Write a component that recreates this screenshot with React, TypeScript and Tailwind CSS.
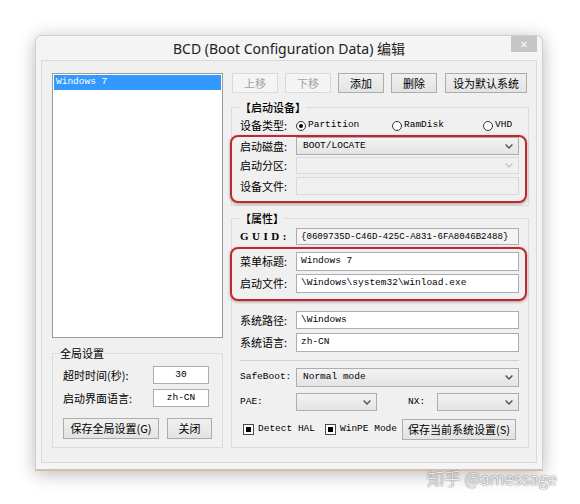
import clsx from "clsx";
import type { ReactNode } from "react";

const CJK = "font-['Noto_Sans_CJK_SC',sans-serif]";
const MONO = "font-['Liberation_Mono','Noto_Sans_CJK_SC',monospace]";

function Chevron({ disabled }: { disabled?: boolean }) {
  return (
    <svg width="8" height="5" viewBox="0 0 8 5" className="shrink-0">
      <path
        d="M0.6 0.6 L4 4 L7.4 0.6"
        fill="none"
        className={disabled ? "stroke-[#c6c6c6]" : "stroke-[#505050]"}
        strokeWidth="1.4"
      />
    </svg>
  );
}

function Combo({ value, disabled, className }: { value?: string; disabled?: boolean; className?: string }) {
  return (
    <div
      className={clsx(
        "flex items-center justify-between border pl-[6px] pr-[5px]",
        disabled ? "border-[#d9d9d9] bg-[#f0f0f0]" : "border-[#adadad] bg-gradient-to-b from-[#f3f3f3] to-[#e4e4e4]",
        className
      )}
    >
      <span className={`${MONO} text-[9.5px] text-black`}>{value}</span>
      <Chevron disabled={disabled} />
    </div>
  );
}

function Edit({
  value,
  className,
  textClass = "text-[9.5px]",
  center,
  tone = "white",
}: {
  value?: string;
  className?: string;
  textClass?: string;
  center?: boolean;
  tone?: "white" | "readonly" | "disabled";
}) {
  return (
    <div
      className={clsx(
        "flex items-center overflow-hidden border",
        center ? "justify-center" : "px-[4px]",
        tone === "white" && "border-[#abadb3] bg-white",
        tone === "readonly" && "border-[#abadb3] bg-[#f4f4f4]",
        tone === "disabled" && "border-[#d9d9d9] bg-[#f0f0f0]",
        className
      )}
    >
      <span className={clsx(MONO, textClass, "whitespace-nowrap text-black")}>{value}</span>
    </div>
  );
}

function Btn({ children, disabled, className }: { children: ReactNode; disabled?: boolean; className?: string }) {
  return (
    <button
      className={clsx(
        `${CJK} flex items-center justify-center border text-[11px] leading-none`,
        disabled
          ? "border-[#d9d9d9] bg-[#f4f4f4] text-[#a3a3a3]"
          : "border-[#acacac] bg-gradient-to-b from-[#f0f0f0] to-[#e3e3e3] text-black",
        className
      )}
    >
      {children}
    </button>
  );
}

function Label({ children, className }: { children: ReactNode; className?: string }) {
  return <span className={clsx(`${CJK} w-[56px] shrink-0 text-[11px] leading-none text-black`, className)}>{children}</span>;
}

function Radio({ label, checked, className }: { label: string; checked?: boolean; className?: string }) {
  return (
    <div className={clsx("flex items-center gap-[2px]", className)}>
      <span className="flex h-[10px] w-[10px] items-center justify-center rounded-full border border-[#333] bg-white">
        {checked && <span className="h-[4px] w-[4px] rounded-full bg-black" />}
      </span>
      <span className={`${MONO} text-[9.5px] text-black`}>{label}</span>
    </div>
  );
}

function Check({ label, className }: { label: string; className?: string }) {
  return (
    <div className={clsx("flex items-center gap-[4px]", className)}>
      <span className="flex h-[11px] w-[11px] items-center justify-center border border-[#4a4a4a] bg-white">
        <span className="h-[5px] w-[5px] bg-black" />
      </span>
      <span className={`${MONO} text-[9.5px] text-black`}>{label}</span>
    </div>
  );
}

function RedBox({ children, className }: { children: ReactNode; className?: string }) {
  return (
    <div
      className={clsx(
        "-ml-[10px] -mr-[8px] rounded-[8px] border-2 border-[#c4262e] pl-[8px] pr-[6px] shadow-[0_1px_3px_rgba(0,0,0,0.35)]",
        className
      )}
    >
      {children}
    </div>
  );
}

export default function App() {
  return (
    <div className="relative h-[504px] w-[580px] overflow-hidden bg-white pl-[35px] pt-[35px]">
      <div className="flex w-[508px] flex-col rounded-t-[6px] border border-[#cfcfcf] border-b-2 border-b-[#d6bfa6] bg-[#f4f4f4] px-[5px] shadow-[0_3px_18px_rgba(0,0,0,0.28)]">
        <div className="grid h-[24px] grid-cols-[1fr_auto_1fr] items-center">
          <span />
          <span className="font-['Noto_Sans','Noto_Sans_CJK_SC',sans-serif] text-[14px] text-[#222]">
            BCD (Boot Configuration Data) 编辑
          </span>
          <span className="flex h-[16px] w-[26px] items-center justify-center self-start justify-self-end bg-[#c6c6c6] text-[13px] leading-none text-white">
            ×
          </span>
        </div>

        <div className="flex h-[403px] gap-[8px] border border-[#dadada] bg-[#f0f0f0] pl-[10px] pr-[7px] pt-[12px]">
          {/* left column */}
          <div className="flex w-[171px] flex-col">
            <div className="h-[265px] border border-[#9b9b9b] bg-white p-[1px]">
              <div className={`${MONO} flex h-[15px] items-center bg-[#3399ff] pl-[2px] text-[9.5px] text-white`}>
                Windows 7
              </div>
            </div>
            <fieldset className="mt-[8px] border border-[#dcdcdc] pb-[8px] pl-[7px] pr-[7px]">
              <legend className={`${CJK} text-[11px] leading-[14px] text-black`}>全局设置</legend>
              <div className="mt-[6px] flex h-[18px] items-center pl-[3px]">
                <span className={`${CJK} w-[90px] text-[11px] text-black`}>超时时间(秒):</span>
                <Edit value="30" center className="h-[18px] w-[56px]" />
              </div>
              <div className="mt-[5px] flex h-[18px] items-center pl-[3px]">
                <span className={`${CJK} w-[90px] text-[11px] text-black`}>启动界面语言:</span>
                <Edit value="zh-CN" center className="h-[18px] w-[56px]" />
              </div>
              <div className="mt-[11px] flex gap-[8px] pl-[3px]">
                <Btn className="h-[21px] w-[96px]">保存全局设置(G)</Btn>
                <Btn className="h-[21px] w-[45px]">关闭</Btn>
              </div>
            </fieldset>
          </div>

          {/* right column */}
          <div className="flex w-[298px] flex-col">
            <div className="ml-[1px] flex h-[20px] gap-[7px]">
              <Btn disabled className="w-[46px]">上移</Btn>
              <Btn disabled className="w-[46px]">下移</Btn>
              <Btn className="w-[46px]">添加</Btn>
              <Btn className="w-[46px]">删除</Btn>
              <Btn className="ml-[1px] w-[82px]">设为默认系统</Btn>
            </div>

            <fieldset className="mt-[7px] border border-[#dcdcdc] pb-[2px] pl-[8px] pr-[9px]">
              <legend className={`${CJK} text-[11px] font-medium leading-[14px] text-black`}>【启动设备】</legend>
              <div className="mt-[4px] flex h-[15px] items-center">
                <Label>设备类型:</Label>
                <Radio label="Partition" checked className="w-[96px]" />
                <Radio label="RamDisk" className="w-[91px]" />
                <Radio label="VHD" />
              </div>
              <RedBox className="mt-[2px] pb-[6px]">
                <div className="flex h-[18px] items-center">
                  <Label>启动磁盘:</Label>
                  <Combo value="BOOT/LOCATE" className="h-[18px] flex-1" />
                </div>
                <div className="mt-[2px] flex h-[17px] items-center">
                  <Label>启动分区:</Label>
                  <Combo disabled className="h-[17px] flex-1" />
                </div>
                <div className="mt-[3px] flex h-[18px] items-center">
                  <Label>设备文件:</Label>
                  <Edit tone="disabled" className="h-[18px] flex-1" />
                </div>
              </RedBox>
            </fieldset>

            <fieldset className="mt-[5px] border border-[#dcdcdc] pb-[7px] pl-[8px] pr-[9px]">
              <legend className={`${CJK} text-[11px] font-medium leading-[14px] text-black`}>【属性】</legend>
              <div className="mt-[3px] flex h-[17px] items-center">
                <span className="w-[56px] shrink-0 font-['Liberation_Serif',serif] text-[11px] font-bold tracking-[3.5px] text-black">
                  GUID:
                </span>
                <Edit
                  tone="readonly"
                  value="{0609735D-C46D-425C-A831-6FA8046B2488}"
                  textClass="text-[9.1px]"
                  className="h-[17px] flex-1"
                />
              </div>
              <RedBox className="mt-[2px] pb-[6px] pt-[3px]">
                <div className="flex h-[19px] items-center">
                  <Label>菜单标题:</Label>
                  <Edit value="Windows 7" className="h-[19px] flex-1" />
                </div>
                <div className="mt-[3px] flex h-[19px] items-center">
                  <Label>启动文件:</Label>
                  <Edit value="\Windows\system32\winload.exe" className="h-[19px] flex-1" />
                </div>
              </RedBox>
              <div className="mt-[10px] flex h-[18px] items-center">
                <Label>系统路径:</Label>
                <Edit value="\Windows" className="h-[18px] flex-1" />
              </div>
              <div className="mt-[4px] flex h-[19px] items-center">
                <Label>系统语言:</Label>
                <Edit value="zh-CN" className="h-[19px] flex-1" />
              </div>
              <div className="mt-[8px] h-px bg-[#d0d0d0]" />
              <div className="mt-[7px] flex h-[19px] items-center">
                <span className={`${MONO} w-[56px] shrink-0 text-[9.5px] text-black`}>SafeBoot:</span>
                <Combo value="Normal mode" className="h-[19px] flex-1" />
              </div>
              <div className="mt-[6px] flex h-[18px] items-center">
                <span className={`${MONO} w-[56px] shrink-0 text-[9.5px] text-black`}>PAE:</span>
                <Combo className="h-[18px] w-[81px]" />
                <span className={`${MONO} ml-[31px] w-[29px] shrink-0 text-[9.5px] text-black`}>NX:</span>
                <Combo className="h-[18px] flex-1" />
              </div>
              <div className="mt-[8px] flex h-[21px] items-center">
                <Check label="Detect HAL" className="ml-[3px]" />
                <Check label="WinPE Mode" className="ml-[10px]" />
                <Btn className="ml-auto mr-[3px] h-[21px] w-[114px]">保存当前系统设置(S)</Btn>
              </div>
            </fieldset>
          </div>
        </div>
        <div className="h-[6px]" />
      </div>

      <div className="absolute left-[427px] top-[465px] font-['Noto_Sans_CJK_SC',sans-serif] text-[17px] font-light text-white [text-shadow:0_0_2px_rgba(0,0,0,0.55),0_0_1px_rgba(0,0,0,0.5)]">
        知乎 @amessage
      </div>
    </div>
  );
}
